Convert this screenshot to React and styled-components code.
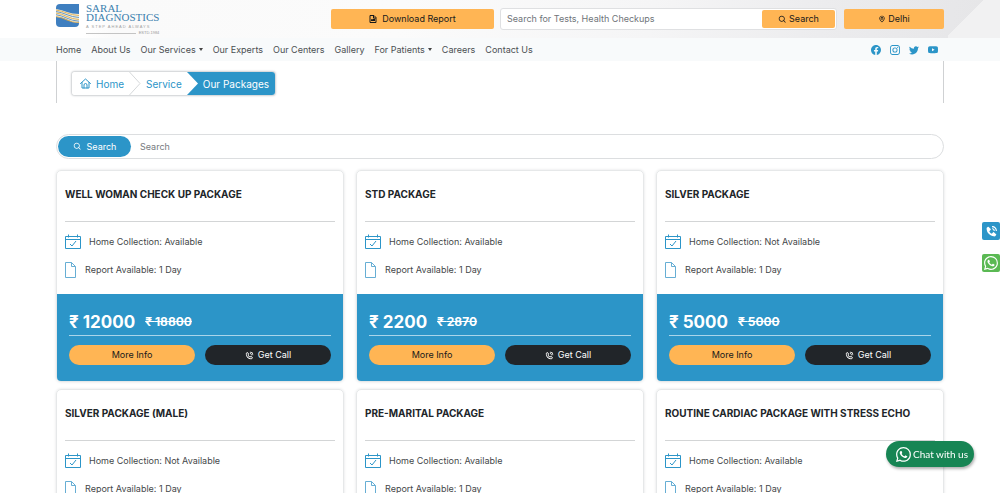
import React from "react";
import styled, { createGlobalStyle } from "styled-components";
import { BsFacebook, BsInstagram, BsTwitter, BsYoutube, BsWhatsapp } from "react-icons/bs";
import { BiSearch, BiPhoneCall, BiMap, BiSolidPhoneCall } from "react-icons/bi";

const BLUE = "#2c95c8";
const ORANGE = "#ffb554";

const Global = createGlobalStyle`
  *, *::before, *::after { box-sizing: border-box; }
  body {
    margin: 0;
    background: #fff;
    color: #212529;
    font: 400 9px/14px Inter, "Liberation Sans", sans-serif;
    overflow-x: hidden;
    scrollbar-width: none;
  }
  button, input { font: inherit; color: inherit; margin: 0; padding: 0; border: 0; background: none; }
  button { cursor: pointer; }
  a { color: inherit; text-decoration: none; }
  svg { display: block; flex: none; }
  html { scrollbar-width: none; }
`;

const TopBar = styled.header`
  display: grid;
  grid-template-columns: 1fr 163px 350px 100px;
  align-items: center;
  height: 38px;
  padding: 0 56px;
  background:
    linear-gradient(135deg, transparent 39%, #f1f1f2 40%) right / 52px 100% no-repeat,
    linear-gradient(100deg, #fff 0%, #fff 9%, #fafafa 12%, #fbfbfb 40%, #f5f5f6 65%, #ececee 82%, #e5e5e7 100%);
`;

const LogoLink = styled.a`
  display: flex;
  gap: 7px;
  align-self: start;
  padding-top: 4px;
`;

const Wordmark = styled.span`
  display: flex;
  flex-direction: column;
  font: 400 11px/9px "Liberation Serif", serif;
  color: #3b7fae;
`;

const Tagline = styled.small`
  padding-top: 1px;
  font: 400 4px/7px "Liberation Sans", sans-serif;
  letter-spacing: 1px;
  color: #a3a3a3;
  white-space: nowrap;
`;

const Established = styled.small`
  display: flex;
  align-items: center;
  gap: 3px;
  font: 400 4px/6px "Liberation Sans", sans-serif;
  color: #999;
  &::before { content: ""; flex: 1; height: 1px; background: #c4c4c4; }
`;

const OrangeButton = styled.button`
  display: flex;
  align-items: center;
  justify-content: center;
  gap: ${(p) => p.$gap || 2}px;
  height: ${(p) => p.$height || 20}px;
  width: ${(p) => p.$width || "auto"};
  border-radius: ${(p) => (p.$pill ? 10 : 2)}px;
  background: ${ORANGE};
  color: #17191b;
`;

const TestSearch = styled.form`
  display: flex;
  align-items: center;
  height: 22px;
  margin: 0 7px 0 6px;
  padding: 1px;
  border: 1px solid #dfe0e2;
  border-radius: 3px;
  background: #fff;
  input {
    flex: 1;
    min-width: 0;
    padding: 0 5px;
    outline: 0;
  }
  input::placeholder { color: #6f7479; opacity: 1; }
`;

const NavBar = styled.nav`
  display: flex;
  align-items: center;
  justify-content: space-between;
  height: 23px;
  padding: 0 62px 0 56px;
  background: #f8fafb;
`;

const NavList = styled.div`
  display: flex;
  align-items: center;
  gap: 10px;
  color: #4b4f52;
`;

const NavToggle = styled.button`
  display: flex;
  align-items: center;
  gap: 3px;
  &::after {
    content: "";
    border: 2px solid transparent;
    border-top: 3px solid #444;
    border-bottom: 0;
  }
`;

const Socials = styled.div`
  display: flex;
  gap: 9px;
  color: ${BLUE};
`;

const Page = styled.main`
  padding: 0 56px 20px;
`;

const CrumbPanel = styled.div`
  height: 42px;
  padding: 10px 14px;
  border: solid #cfd1d3;
  border-width: 0 1px;
`;

const Crumbs = styled.nav`
  display: inline-flex;
  height: 25px;
  border: 1px solid #d9dbdd;
  border-radius: 4px;
  box-shadow: 0 0 2px #cfd1d3;
  overflow: hidden;
  background: #fff;
  font-size: 10px;
  color: ${BLUE};
`;

const Crumb = styled.a`
  display: flex;
  align-items: center;
  gap: 5px;
  padding: ${(p) => p.$pad};
  background: ${(p) => (p.$active ? BLUE : "#fff")};
  color: ${(p) => (p.$active ? "#fff" : BLUE)};
`;

const CrumbArrow = styled.svg`
  width: 12px;
  height: 23px;
  background: ${(p) => (p.$solid ? BLUE : "#fff")};
`;

const PackageSearch = styled.form`
  display: flex;
  height: 25px;
  margin: 31px 0 11px;
  padding: 1px;
  border: 1px solid #dcdee0;
  border-radius: 13px;
  button {
    display: flex;
    align-items: center;
    justify-content: center;
    gap: 5px;
    width: 73px;
    height: 21px;
    border-radius: 11px;
    background: ${BLUE};
    color: #fff;
  }
  input { flex: 1; padding: 0 9px; outline: 0; }
  input::placeholder { color: #777b80; opacity: 1; }
`;

const Grid = styled.section`
  display: grid;
  grid-template-columns: repeat(3, minmax(0, 1fr));
  gap: 7px 12px;
`;

const Card = styled.article`
  border: 1px solid #e6e8e9;
  border-radius: 5px;
  box-shadow: 0 0 3px #dfe1e2;
  overflow: hidden;
`;

const CardBody = styled.div`
  padding: 15px 8px;
  color: #444749;
`;

const CardTitle = styled.h2`
  height: 36px;
  margin: 0 0 11px;
  border-bottom: 1px solid #d3d5d6;
  font-size: 10px;
  line-height: 16px;
  font-weight: 700;
  color: #212529;
  white-space: nowrap;
`;

const Fact = styled.p`
  display: flex;
  align-items: center;
  gap: 8px;
  height: 18px;
  margin: 0 0 10px;
  &:last-child { margin: 0; }
`;

const PricePanel = styled.div`
  height: 87px;
  padding: 15px 12px;
  background: ${BLUE};
  color: #fff;
`;

const Prices = styled.div`
  display: flex;
  align-items: center;
  gap: 10px;
  height: 27px;
  margin-bottom: 9px;
  border-bottom: 1px solid #a9d5ea;
  font-weight: 700;
  font-size: 17px;
  del { font-size: 12px; }
`;

const Actions = styled.div`
  display: grid;
  grid-template-columns: 1fr 1fr;
  gap: 10px;
`;

const CallButton = styled(OrangeButton)`
  background: #212529;
  color: #fff;
`;

const SideDock = styled.aside`
  position: fixed;
  right: 0;
  top: 222px;
  display: grid;
  gap: 14px;
`;

const DockLink = styled.a`
  display: grid;
  place-items: center;
  width: 18px;
  height: 18px;
  border-radius: 2px;
  background: ${(p) => p.$color};
  color: #fff;
`;

const ChatLink = styled.a`
  position: fixed;
  right: 26px;
  bottom: 26px;
  display: flex;
  align-items: center;
  gap: 2px;
  height: 26px;
  padding: 0 6px 0 10px;
  border-radius: 13px;
  background: #178554;
  box-shadow: 1px 2px 3px #00000050;
  color: #fff;
  font: 400 10px/14px Lato, sans-serif;
  white-space: nowrap;
`;

const LogoMark = () => (
  <svg width="23" height="23" viewBox="0 0 23 23" aria-hidden="true">
    <path d="M4 0h19v19q0 4-4 4H4q-4 0-4-4V4q0-4 4-4z" fill="#3f7fc0" />
    <path d="M0 5q6 1 11 3t12 2v9q-6 0-11-3T0 13z" fill="#f4efdf" />
    <path d="M0 6q6 1 11 3t12 2.500M0 9q6 1 11 3.500t12 3M0 12.500q6 1 11 3.500t12 2.500" fill="none" stroke="#e0ad4c" strokeWidth=".9" />
    <path d="M0 7.500q6 1 11 3.200t12 2.800M0 10.700q6 1 11 3.500t12 3" fill="none" stroke="#5a8fc0" strokeWidth=".9" />
  </svg>
);

const ReportIcon = () => (
  <svg width="8" height="8" viewBox="0 0 16 16" fill="none" stroke="currentColor" strokeWidth="2" aria-hidden="true">
    <path d="M2 1h8l4 4v10H2zM9 1v5h5" />
    <path d="M5 12V9h2v3M9 12V8h2v4" />
  </svg>
);

const HomeIcon = () => (
  <svg width="11" height="11" viewBox="0 0 22 22" fill="none" stroke="currentColor" strokeWidth="2" strokeLinejoin="round" strokeLinecap="round" aria-hidden="true">
    <path d="M1 11 11 2l10 9M4 9v11h14V9" />
    <path d="M8 20v-6q0-3 3-3t3 3v6" />
  </svg>
);

const CalendarIcon = () => (
  <svg width="16" height="16" viewBox="0 0 16 16" fill="none" stroke={BLUE} aria-hidden="true">
    <path d="M.5 2.500h15v12H.5zM.5 5.500h15M3.500.5v3M12.500.5v3" />
    <path d="m5 10 2 2 4-5" />
  </svg>
);

const FileIcon = () => (
  <svg width="12" height="16" viewBox="0 0 12 16" fill="none" stroke="#67aed4" aria-hidden="true">
    <path d="M.5.5h6l4 4v11H.5zM6.500.5v4h4" />
  </svg>
);

const packages = [
  ["WELL WOMAN CHECK UP PACKAGE", "Available", "12000", "18800"],
  ["STD PACKAGE", "Available", "2200", "2870"],
  ["SILVER PACKAGE", "Not Available", "5000", "5000"],
  ["SILVER PACKAGE (MALE)", "Not Available", "6000", "6000"],
  ["PRE-MARITAL PACKAGE", "Available", "4500", "5200"],
  ["ROUTINE CARDIAC PACKAGE WITH STRESS ECHO", "Available", "7000", "8500"],
];

const PackageCard = ({ name, collection, price, oldPrice }) => (
  <Card>
    <CardBody>
      <CardTitle>{name}</CardTitle>
      <Fact><CalendarIcon />Home Collection: {collection}</Fact>
      <Fact><FileIcon />Report Available: 1 Day</Fact>
    </CardBody>
    <PricePanel>
      <Prices><span>₹ {price}</span><del>₹ {oldPrice}</del></Prices>
      <Actions>
        <OrangeButton type="button" $pill>More Info</OrangeButton>
        <CallButton type="button" $pill $gap={4}><BiPhoneCall size={9} />Get Call</CallButton>
      </Actions>
    </PricePanel>
  </Card>
);

export default function App() {
  return (
    <>
      <Global />
      <TopBar>
        <LogoLink href="#" aria-label="Saral Diagnostics">
          <LogoMark />
          <Wordmark>
            <span>SARAL</span>
            <span>DIAGNOSTICS</span>
            <Tagline>A STEP AHEAD ALWAYS</Tagline>
            <Established>ESTD.1984</Established>
          </Wordmark>
        </LogoLink>
        <OrangeButton type="button" $gap={5}><ReportIcon />Download Report</OrangeButton>
        <TestSearch role="search" onSubmit={(e) => e.preventDefault()}>
          <input aria-label="Search for tests" placeholder="Search for Tests, Health Checkups" />
          <OrangeButton $width="73px" $height={18}><BiSearch size={9} />Search</OrangeButton>
        </TestSearch>
        <OrangeButton type="button"><BiMap size={8} />Delhi</OrangeButton>
      </TopBar>
      <NavBar aria-label="Main">
        <NavList>
          <a href="#">Home</a>
          <a href="#">About Us</a>
          <NavToggle type="button">Our Services</NavToggle>
          <a href="#">Our Experts</a>
          <a href="#">Our Centers</a>
          <a href="#">Gallery</a>
          <NavToggle type="button">For Patients</NavToggle>
          <a href="#">Careers</a>
          <a href="#">Contact Us</a>
        </NavList>
        <Socials>
          <a href="#" aria-label="Facebook"><BsFacebook size={10} /></a>
          <a href="#" aria-label="Instagram"><BsInstagram size={10} /></a>
          <a href="#" aria-label="Twitter"><BsTwitter size={10} /></a>
          <a href="#" aria-label="YouTube"><BsYoutube size={10} /></a>
        </Socials>
      </NavBar>
      <Page>
        <CrumbPanel>
          <Crumbs aria-label="Breadcrumb">
            <Crumb href="#" $pad="0 5px 0 8px"><HomeIcon />Home</Crumb>
            <CrumbArrow viewBox="0 0 12 23" aria-hidden="true">
              <path d="M.5 0 11 11.500.5 23" fill="none" stroke="#d5d8da" />
            </CrumbArrow>
            <Crumb href="#" $pad="0 5px">Service</Crumb>
            <CrumbArrow $solid viewBox="0 0 12 23" aria-hidden="true">
              <path d="M0 0 11 11.500 0 23z" fill="#fff" />
            </CrumbArrow>
            <Crumb href="#" $active aria-current="page" $pad="0 6px 0 4px">Our Packages</Crumb>
          </Crumbs>
        </CrumbPanel>
        <PackageSearch role="search" onSubmit={(e) => e.preventDefault()}>
          <button><BiSearch size={9} />Search</button>
          <input aria-label="Search packages" placeholder="Search" />
        </PackageSearch>
        <Grid>
          {packages.map(([name, collection, price, oldPrice]) => (
            <PackageCard key={name} name={name} collection={collection} price={price} oldPrice={oldPrice} />
          ))}
        </Grid>
      </Page>
      <SideDock>
        <DockLink href="#" $color={BLUE} aria-label="Call us"><BiSolidPhoneCall size={13} /></DockLink>
        <DockLink href="#" $color="#5ab953" aria-label="WhatsApp"><BsWhatsapp size={14} /></DockLink>
      </SideDock>
      <ChatLink href="#"><BsWhatsapp size={15} />Chat with us</ChatLink>
    </>
  );
}
